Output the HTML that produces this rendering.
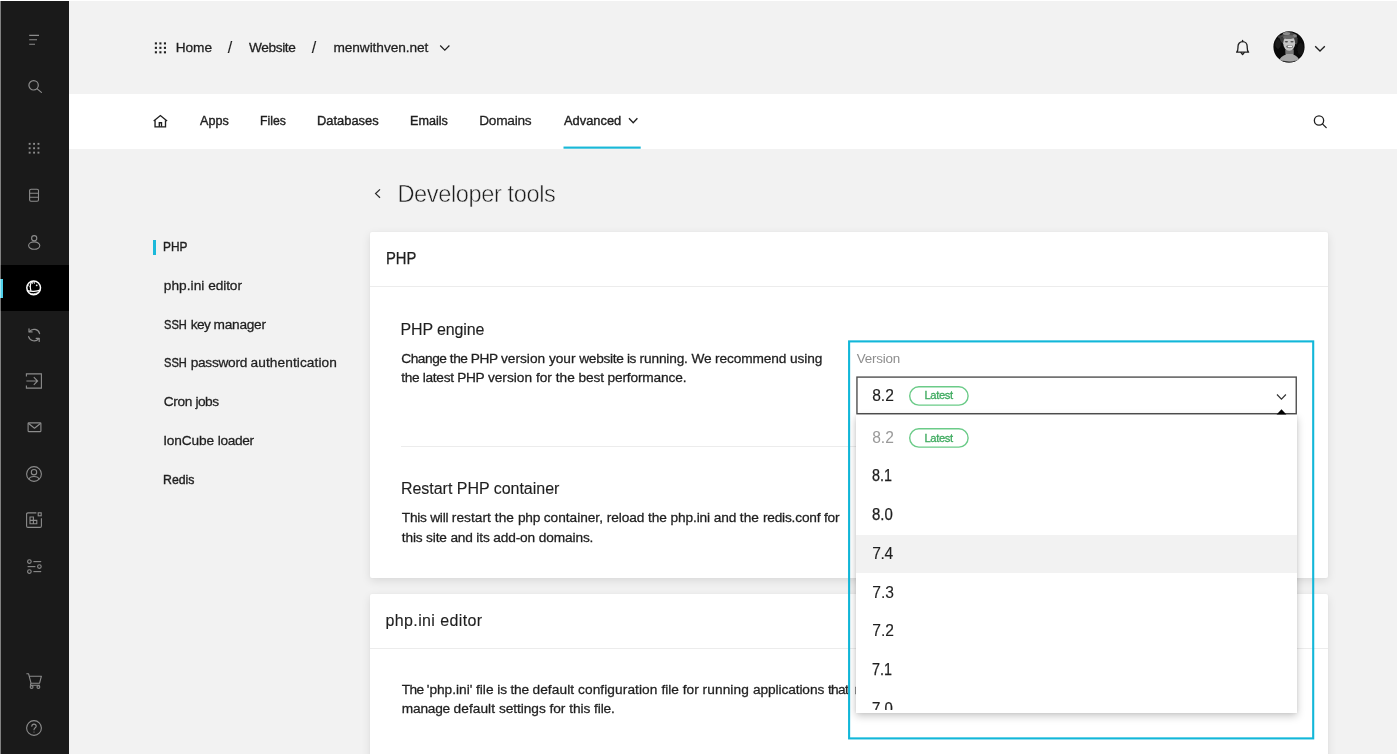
<!DOCTYPE html>
<html lang="en">
<head>
<meta charset="utf-8">
<title>Developer tools</title>
<style>
*{box-sizing:border-box;margin:0;padding:0}
html,body{width:1400px;height:754px;overflow:hidden;background:#fff}
body{position:relative;font-family:"Liberation Sans",sans-serif;color:#1f1f1f}
.abs{position:absolute}
.t{position:absolute;white-space:nowrap;line-height:1;font-family:"Liberation Sans",sans-serif}
#page{position:absolute;left:0;top:0;width:1400px;height:754px;background:#f2f2f2;overflow:hidden;filter:blur(0.4px)}
#wt{position:absolute;left:0;top:0;width:1400px;height:1.2px;background:#fff;z-index:50}
#wr{position:absolute;left:1397.4px;top:0;width:3px;height:754px;background:#fff;z-index:50}
#side{position:absolute;left:0;top:0;width:68.5px;height:754px;background:#1a1a1a}
#side .edge{position:absolute;left:0;top:0;width:1px;height:754px;background:rgba(255,255,255,.45)}
#side .act{position:absolute;left:0;top:265px;width:68.5px;height:46px;background:#000}
#side .bar{position:absolute;left:0;top:278.5px;width:3.2px;height:19.2px;background:#4fd0ea}
#side svg{position:absolute;overflow:visible}
#nav{position:absolute;left:68.5px;top:94.3px;width:1329px;height:54.3px;background:#fff}
.card{position:absolute;left:370px;width:958px;background:#fff;border-radius:2px;box-shadow:0 3px 10px rgba(0,0,0,.10),0 0 2px rgba(0,0,0,.04)}
.hr{position:absolute;height:1.2px;background:#ececec}
#hl{position:absolute;left:0;top:0}
#sel{position:absolute;left:856.2px;top:376.0px;width:441px;height:38.6px;border:1.2px solid #4a4a4a;background:#fff}
.pill{position:absolute;width:60px;height:20px;border:1.2px solid #63c982;border-radius:10px}
#panel{position:absolute;left:856px;top:415.0px;width:441px;height:297.6px;background:#fff;box-shadow:0 3px 8px rgba(0,0,0,.22),0 0 3px rgba(0,0,0,.08);overflow:hidden}
#panel .hi{position:absolute;left:0;top:120px;width:441px;height:38.4px;background:#f2f2f2}
#panel .clip{position:absolute;left:0;top:0;width:441px;height:295px;overflow:hidden}
</style>
</head>
<body>
<div id="wt"></div><div id="wr"></div>
<div id="page">
  <!-- top white nav bar -->
  <div id="nav"></div>
  <svg class="abs" style="left:563px;top:145px" width="79" height="5" viewBox="0 0 79 5"><rect x="0.5" y="1.55" width="77.2" height="2.15" fill="#19b8d7"/></svg>

  <!-- cards -->
  <div class="card" style="top:231.6px;height:346.8px"></div>
  <div class="card" style="top:593.8px;height:200px"></div>
  <div class="hr" style="left:370px;top:285.8px;width:958px"></div>
  <div class="hr" style="left:401px;top:445.8px;width:896px"></div>
  <div class="hr" style="left:370px;top:647.6px;width:958px"></div>

  <!-- left nav active bar -->
  <div class="abs" style="left:152.5px;top:239.7px;width:3px;height:15.6px;background:#1cb9da"></div>

  <div style="position:absolute;left:0;top:0">
<span class="t" style="left:175.70px;top:40px;font-size:13.7px;line-height:15px;color:#1f1f1f;letter-spacing:-0.066px;-webkit-text-stroke:0.28px #1f1f1f">Home</span>
<span class="t" style="left:227.80px;top:39px;font-size:16px;line-height:17px;color:#1f1f1f;letter-spacing:0.000px;-webkit-text-stroke:0.12px #1f1f1f">/</span>
<span class="t" style="left:248.95px;top:40px;font-size:13.7px;line-height:15px;color:#1f1f1f;letter-spacing:-0.372px;-webkit-text-stroke:0.28px #1f1f1f">Website</span>
<span class="t" style="left:311.80px;top:39px;font-size:16px;line-height:17px;color:#1f1f1f;letter-spacing:0.000px;-webkit-text-stroke:0.12px #1f1f1f">/</span>
<span class="t" style="left:333.45px;top:40px;font-size:13.7px;line-height:15px;color:#1f1f1f;letter-spacing:-0.074px;-webkit-text-stroke:0.28px #1f1f1f">menwithven.net</span>
<span class="t" style="left:199.70px;top:113px;font-size:13.7px;line-height:15px;color:#1f1f1f;letter-spacing:0.000px;-webkit-text-stroke:0.42px #1f1f1f;transform:scaleX(0.9201);transform-origin:0 0">Apps</span>
<span class="t" style="left:259.81px;top:113px;font-size:13.7px;line-height:15px;color:#1f1f1f;letter-spacing:0.000px;-webkit-text-stroke:0.42px #1f1f1f;transform:scaleX(0.8947);transform-origin:0 0">Files</span>
<span class="t" style="left:316.76px;top:113px;font-size:13.7px;line-height:15px;color:#1f1f1f;letter-spacing:0.000px;-webkit-text-stroke:0.42px #1f1f1f;transform:scaleX(0.9421);transform-origin:0 0">Databases</span>
<span class="t" style="left:409.88px;top:113px;font-size:13.7px;line-height:15px;color:#1f1f1f;letter-spacing:0.000px;-webkit-text-stroke:0.42px #1f1f1f;transform:scaleX(0.9198);transform-origin:0 0">Emails</span>
<span class="t" style="left:479.20px;top:113px;font-size:13.7px;line-height:15px;color:#1f1f1f;letter-spacing:-0.261px;-webkit-text-stroke:0.28px #1f1f1f">Domains</span>
<span class="t" style="left:563.95px;top:113px;font-size:13.7px;line-height:15px;color:#1f1f1f;letter-spacing:0.000px;-webkit-text-stroke:0.42px #1f1f1f;transform:scaleX(0.9392);transform-origin:0 0">Advanced</span>
<span class="t" style="left:397.45px;top:181px;font-size:23.6px;line-height:26px;color:#1c1c1c;letter-spacing:-0.399px;-webkit-text-stroke:0.5px #f2f2f2">Developer tools</span>
<span class="t" style="left:163.09px;top:239px;font-size:13.7px;line-height:15px;color:#1f1f1f;letter-spacing:0.000px;-webkit-text-stroke:0.42px #1f1f1f;transform:scaleX(0.8644);transform-origin:0 0">PHP</span>
<span class="t" style="left:163.75px;top:278px;font-size:13.7px;line-height:15px;color:#1f1f1f;letter-spacing:0.039px;-webkit-text-stroke:0.28px #1f1f1f">php.ini </span>
<span class="t" style="left:208.20px;top:278px;font-size:13.7px;line-height:15px;color:#1f1f1f;letter-spacing:-0.096px;-webkit-text-stroke:0.28px #1f1f1f">editor</span>
<span class="t" style="left:163.75px;top:317px;font-size:13.7px;line-height:15px;color:#1f1f1f;letter-spacing:0.000px;-webkit-text-stroke:0.42px #1f1f1f;transform:scaleX(0.8126);transform-origin:0 0">SSH </span>
<span class="t" style="left:190.70px;top:317px;font-size:13.7px;line-height:15px;color:#1f1f1f;letter-spacing:-0.551px;-webkit-text-stroke:0.28px #1f1f1f">key </span>
<span class="t" style="left:213.60px;top:317px;font-size:13.7px;line-height:15px;color:#1f1f1f;letter-spacing:-0.277px;-webkit-text-stroke:0.28px #1f1f1f">manager</span>
<span class="t" style="left:163.75px;top:355px;font-size:13.7px;line-height:15px;color:#1f1f1f;letter-spacing:0.000px;-webkit-text-stroke:0.42px #1f1f1f;transform:scaleX(0.8126);transform-origin:0 0">SSH </span>
<span class="t" style="left:190.70px;top:355px;font-size:13.7px;line-height:15px;color:#1f1f1f;letter-spacing:-0.281px;-webkit-text-stroke:0.28px #1f1f1f">password </span>
<span class="t" style="left:250.55px;top:355px;font-size:13.7px;line-height:15px;color:#1f1f1f;letter-spacing:0.079px;-webkit-text-stroke:0.28px #1f1f1f">authentication</span>
<span class="t" style="left:163.75px;top:394px;font-size:13.7px;line-height:15px;color:#1f1f1f;letter-spacing:-0.364px;-webkit-text-stroke:0.28px #1f1f1f">Cron </span>
<span class="t" style="left:195.40px;top:394px;font-size:13.7px;line-height:15px;color:#1f1f1f;letter-spacing:-0.489px;-webkit-text-stroke:0.28px #1f1f1f">jobs</span>
<span class="t" style="left:163.20px;top:433px;font-size:13.7px;line-height:15px;color:#1f1f1f;letter-spacing:-0.132px;-webkit-text-stroke:0.28px #1f1f1f">IonCube </span>
<span class="t" style="left:217.70px;top:433px;font-size:13.7px;line-height:15px;color:#1f1f1f;letter-spacing:-0.318px;-webkit-text-stroke:0.28px #1f1f1f">loader</span>
<span class="t" style="left:163.40px;top:472px;font-size:13.7px;line-height:15px;color:#1f1f1f;letter-spacing:0.000px;-webkit-text-stroke:0.42px #1f1f1f;transform:scaleX(0.8990);transform-origin:0 0">Redis</span>
<span class="t" style="left:385.53px;top:250px;font-size:16px;line-height:17px;color:#1f1f1f;letter-spacing:0.000px;-webkit-text-stroke:0.25px #1f1f1f;transform:scaleX(0.9239);transform-origin:0 0">PHP</span>
<span class="t" style="left:400.45px;top:321px;font-size:16px;line-height:17px;color:#1f1f1f;letter-spacing:-0.127px;-webkit-text-stroke:0.12px #1f1f1f">PHP engine</span>
<span class="t" style="left:401.25px;top:351px;font-size:13.7px;line-height:15px;color:#1f1f1f;letter-spacing:-0.452px;-webkit-text-stroke:0.28px #1f1f1f">Change the PHP </span>
<span class="t" style="left:501.00px;top:351px;font-size:13.7px;line-height:15px;color:#1f1f1f;letter-spacing:-0.004px;-webkit-text-stroke:0.28px #1f1f1f">version your </span>
<span class="t" style="left:579.30px;top:351px;font-size:13.7px;line-height:15px;color:#1f1f1f;letter-spacing:-0.327px;-webkit-text-stroke:0.28px #1f1f1f">website is </span>
<span class="t" style="left:639.60px;top:351px;font-size:13.7px;line-height:15px;color:#1f1f1f;letter-spacing:-0.163px;-webkit-text-stroke:0.28px #1f1f1f">running. We </span>
<span class="t" style="left:715.00px;top:351px;font-size:13.7px;line-height:15px;color:#1f1f1f;letter-spacing:-0.106px;-webkit-text-stroke:0.28px #1f1f1f">recommend using</span>
<span class="t" style="left:401.25px;top:370px;font-size:13.7px;line-height:15px;color:#1f1f1f;letter-spacing:-0.310px;-webkit-text-stroke:0.28px #1f1f1f">the latest PHP </span>
<span class="t" style="left:487.90px;top:370px;font-size:13.7px;line-height:15px;color:#1f1f1f;letter-spacing:0.010px;-webkit-text-stroke:0.28px #1f1f1f">version for the </span>
<span class="t" style="left:578.60px;top:370px;font-size:13.7px;line-height:15px;color:#1f1f1f;letter-spacing:-0.151px;-webkit-text-stroke:0.28px #1f1f1f">best performance.</span>
<span class="t" style="left:400.95px;top:480px;font-size:16px;line-height:17px;color:#1f1f1f;letter-spacing:-0.025px;-webkit-text-stroke:0.12px #1f1f1f">Restart PHP container</span>
<span class="t" style="left:401.80px;top:510px;font-size:13.7px;line-height:15px;color:#1f1f1f;letter-spacing:-0.247px;-webkit-text-stroke:0.28px #1f1f1f">This will </span>
<span class="t" style="left:451.80px;top:510px;font-size:13.7px;line-height:15px;color:#1f1f1f;letter-spacing:0.056px;-webkit-text-stroke:0.28px #1f1f1f">restart the </span>
<span class="t" style="left:517.90px;top:510px;font-size:13.7px;line-height:15px;color:#1f1f1f;letter-spacing:-0.197px;-webkit-text-stroke:0.28px #1f1f1f">php </span>
<span class="t" style="left:543.75px;top:510px;font-size:13.7px;line-height:15px;color:#1f1f1f;letter-spacing:-0.019px;-webkit-text-stroke:0.28px #1f1f1f">container, </span>
<span class="t" style="left:606.70px;top:510px;font-size:13.7px;line-height:15px;color:#1f1f1f;letter-spacing:-0.080px;-webkit-text-stroke:0.28px #1f1f1f">reload the </span>
<span class="t" style="left:670.50px;top:510px;font-size:13.7px;line-height:15px;color:#1f1f1f;letter-spacing:-0.123px;-webkit-text-stroke:0.28px #1f1f1f">php.ini and </span>
<span class="t" style="left:739.80px;top:510px;font-size:13.7px;line-height:15px;color:#1f1f1f;letter-spacing:0.067px;-webkit-text-stroke:0.28px #1f1f1f">the </span>
<span class="t" style="left:762.90px;top:510px;font-size:13.7px;line-height:15px;color:#1f1f1f;letter-spacing:-0.189px;-webkit-text-stroke:0.28px #1f1f1f">redis.conf for</span>
<span class="t" style="left:401.80px;top:530px;font-size:13.7px;line-height:15px;color:#1f1f1f;letter-spacing:-0.161px;-webkit-text-stroke:0.28px #1f1f1f">this site </span>
<span class="t" style="left:450.40px;top:530px;font-size:13.7px;line-height:15px;color:#1f1f1f;letter-spacing:-0.166px;-webkit-text-stroke:0.28px #1f1f1f">and its </span>
<span class="t" style="left:493.20px;top:530px;font-size:13.7px;line-height:15px;color:#1f1f1f;letter-spacing:-0.125px;-webkit-text-stroke:0.28px #1f1f1f">add-on </span>
<span class="t" style="left:538.75px;top:530px;font-size:13.7px;line-height:15px;color:#1f1f1f;letter-spacing:-0.127px;-webkit-text-stroke:0.28px #1f1f1f">domains.</span>
<span class="t" style="left:385.45px;top:612px;font-size:16px;line-height:17px;color:#1f1f1f;letter-spacing:0.389px;-webkit-text-stroke:0.12px #1f1f1f">php.ini editor</span>
<span class="t" style="left:401.80px;top:682px;font-size:13.7px;line-height:15px;color:#1f1f1f;letter-spacing:-0.597px;-webkit-text-stroke:0.28px #1f1f1f">The </span>
<span class="t" style="left:426.80px;top:682px;font-size:13.7px;line-height:15px;color:#1f1f1f;letter-spacing:-0.011px;-webkit-text-stroke:0.28px #1f1f1f">'php.ini' file </span>
<span class="t" style="left:497.30px;top:682px;font-size:13.7px;line-height:15px;color:#1f1f1f;letter-spacing:-0.188px;-webkit-text-stroke:0.28px #1f1f1f">is the </span>
<span class="t" style="left:532.50px;top:682px;font-size:13.7px;line-height:15px;color:#1f1f1f;letter-spacing:0.075px;-webkit-text-stroke:0.28px #1f1f1f">default </span>
<span class="t" style="left:578.00px;top:682px;font-size:13.7px;line-height:15px;color:#1f1f1f;letter-spacing:0.087px;-webkit-text-stroke:0.28px #1f1f1f">configuration </span>
<span class="t" style="left:661.40px;top:682px;font-size:13.7px;line-height:15px;color:#1f1f1f;letter-spacing:0.003px;-webkit-text-stroke:0.28px #1f1f1f">file for </span>
<span class="t" style="left:702.50px;top:682px;font-size:13.7px;line-height:15px;color:#1f1f1f;letter-spacing:0.117px;-webkit-text-stroke:0.28px #1f1f1f">running </span>
<span class="t" style="left:752.90px;top:682px;font-size:13.7px;line-height:15px;color:#1f1f1f;letter-spacing:-0.084px;-webkit-text-stroke:0.28px #1f1f1f">applications </span>
<span class="t" style="left:827.90px;top:682px;font-size:13.7px;line-height:15px;color:#1f1f1f;letter-spacing:-0.642px;-webkit-text-stroke:0.28px #1f1f1f">that</span>
<span class="t" style="left:854.70px;top:682px;font-size:13.7px;line-height:15px;color:#1f1f1f;letter-spacing:0.000px;-webkit-text-stroke:0.28px #1f1f1f">require special settings. You can</span>
<span class="t" style="left:401.80px;top:701px;font-size:13.7px;line-height:15px;color:#1f1f1f;letter-spacing:-0.209px;-webkit-text-stroke:0.28px #1f1f1f">manage </span>
<span class="t" style="left:453.60px;top:701px;font-size:13.7px;line-height:15px;color:#1f1f1f;letter-spacing:0.050px;-webkit-text-stroke:0.28px #1f1f1f">default </span>
<span class="t" style="left:498.90px;top:701px;font-size:13.7px;line-height:15px;color:#1f1f1f;letter-spacing:-0.042px;-webkit-text-stroke:0.28px #1f1f1f">settings </span>
<span class="t" style="left:549.50px;top:701px;font-size:13.7px;line-height:15px;color:#1f1f1f;letter-spacing:-0.031px;-webkit-text-stroke:0.28px #1f1f1f">for this </span>
<span class="t" style="left:594.10px;top:701px;font-size:13.7px;line-height:15px;color:#1f1f1f;letter-spacing:-0.124px;-webkit-text-stroke:0.28px #1f1f1f">file.</span>
  </div>

  <!-- breadcrumb icons -->
  <svg class="abs" style="left:154px;top:41.8px" width="13" height="12" viewBox="0 0 13 12" fill="#1f1f1f"><rect x="0.85" y="0.35" width="2.1" height="2.1"/><rect x="5.35" y="0.35" width="2.1" height="2.1"/><rect x="9.90" y="0.35" width="2.1" height="2.1"/><rect x="0.85" y="4.80" width="2.1" height="2.1"/><rect x="5.35" y="4.80" width="2.1" height="2.1"/><rect x="9.90" y="4.80" width="2.1" height="2.1"/><rect x="0.85" y="9.25" width="2.1" height="2.1"/><rect x="5.35" y="9.25" width="2.1" height="2.1"/><rect x="9.90" y="9.25" width="2.1" height="2.1"/></svg>
  <svg class="abs" style="left:439px;top:44.2px" width="12" height="8" viewBox="0 0 12 8" fill="none" stroke="#1f1f1f" stroke-width="1.2"><path d="M1.2 1.5 L5.8 6.2 L10.4 1.5"/></svg>

  <!-- home icon -->
  <svg class="abs" style="left:152px;top:114px" width="17" height="15" viewBox="0 0 17 15" fill="none" stroke="#1f1f1f" stroke-width="1.35" stroke-linejoin="miter" stroke-linecap="butt">
    <path d="M1.7 7 L8.4 1.5 L15.1 7"/><path d="M3.05 6.2 V12.85 H13.5 V6.2"/><path d="M7.3 12.85 V8.7 H9.5 V12.85"/>
  </svg>
  <!-- advanced chevron -->
  <svg class="abs" style="left:628px;top:116.6px" width="11" height="8" viewBox="0 0 11 8" fill="none" stroke="#1f1f1f" stroke-width="1.3"><path d="M1 1.2 L5.2 5.8 L9.4 1.2"/></svg>
  <!-- back chevron -->
  <svg class="abs" style="left:374px;top:188.4px" width="8" height="12" viewBox="0 0 8 12" fill="none" stroke="#2a2a2a" stroke-width="1.25"><path d="M6 1.4 L1.6 5.6 L6 9.8"/></svg>

  <!-- bell -->
  <svg class="abs" style="left:1234px;top:39.0px" width="18" height="18" viewBox="0 0 18 18" fill="none" stroke="#1f1f1f" stroke-width="1.3" stroke-linejoin="round" stroke-linecap="round">
    <path d="M2.6 13.2 C4.2 11.8 4 9.6 4 7.6 C4 4.6 6 2.6 8.6 2.6 C11.2 2.6 13.2 4.6 13.2 7.6 C13.2 9.6 13 11.8 14.6 13.2 Z"/><path d="M7 13.6 L8.6 15.6 L10.2 13.6"/><path d="M8.6 1.4 V2.6"/>
  </svg>
  <!-- avatar -->
  <svg class="abs" style="left:1272px;top:29.3px" width="34" height="34" viewBox="-1 -1 34 34">
    <defs><clipPath id="av"><circle cx="16" cy="16.9" r="15.6"/></clipPath>
    <filter id="bl" x="-20%" y="-20%" width="140%" height="140%"><feGaussianBlur stdDeviation="0.75"/></filter></defs>
    <circle cx="16" cy="16.9" r="16.3" fill="#fafafa"/>
    <g clip-path="url(#av)">
      <rect x="-1" y="-1" width="34" height="34" fill="#0a0a0a"/>
      <g filter="url(#bl)">
        <ellipse cx="5" cy="14" rx="3" ry="5" fill="#1a1a1a"/>
        <ellipse cx="27.5" cy="19" rx="3" ry="6" fill="#181818"/>
        <ellipse cx="7.5" cy="7" rx="2.6" ry="1.8" fill="#3c3c3c"/>
        <ellipse cx="15.8" cy="8.6" rx="8.6" ry="6.6" fill="#4e4e4e"/>
        <ellipse cx="13.5" cy="3.6" rx="3.6" ry="1.5" fill="#8c8c8c"/>
        <ellipse cx="21.8" cy="5.8" rx="2.2" ry="1.6" fill="#808080"/>
        <ellipse cx="9" cy="9.5" rx="1.5" ry="3" fill="#3a3a3a"/>
        <ellipse cx="23" cy="11" rx="1.6" ry="3.4" fill="#3a3a3a"/>
        <path d="M5.5 33 C6 27.5 10.5 25.8 12.8 24.6 L12.6 19.5 H20.4 L20.4 24.6 C22.6 25.8 26.5 27.5 27 33Z" fill="#a6a6a6"/>
        <rect x="12.6" y="19.4" width="7.8" height="4.6" fill="#787878"/>
        <ellipse cx="16.2" cy="13.3" rx="6" ry="7.4" fill="#c6c6c6"/>
        <ellipse cx="15.6" cy="6.9" rx="5.4" ry="2" fill="#6a6a6a"/>
        <ellipse cx="13.4" cy="11.7" rx="1.7" ry="0.8" fill="#4c4c4c"/>
        <ellipse cx="19" cy="11.7" rx="1.7" ry="0.8" fill="#4c4c4c"/>
        <ellipse cx="16.6" cy="16.6" rx="3.4" ry="1.7" fill="#6e6e6e"/>
        <ellipse cx="17" cy="16.4" rx="2.4" ry="0.9" fill="#f4f4f4"/>
        <path d="M4 33 C6.5 29.5 11 31.2 16 31.6 C21 31.2 25.5 29 28.5 33Z" fill="#2e2e2e"/>
      </g>
    </g>
  </svg>
  <svg class="abs" style="left:1314px;top:44.6px" width="12" height="8" viewBox="0 0 12 8" fill="none" stroke="#1f1f1f" stroke-width="1.3"><path d="M1.2 1.3 L6 6 L10.8 1.3"/></svg>
  <!-- search right -->
  <svg class="abs" style="left:1312px;top:114.0px" width="16" height="16" viewBox="0 0 16 16" fill="none" stroke="#1f1f1f" stroke-width="1.3" stroke-linecap="round"><circle cx="7" cy="6.5" r="4.65"/><path d="M10.4 9.9 L14.2 13.6"/></svg>

  <!-- highlight frame -->
  <svg class="abs" style="left:846px;top:338px" width="470" height="404" viewBox="0 0 470 404"><rect x="3.1" y="3.4" width="464.1" height="397" fill="none" stroke="#12b7d9" stroke-width="2.1"/></svg>

  <!-- select -->
  <svg class="abs" style="left:855px;top:375px" width="444" height="42" viewBox="0 0 444 42"><rect x="1.95" y="2.1" width="439.3" height="36.6" fill="#fff" stroke="#505050" stroke-width="1.4"/></svg>
  <svg class="abs" style="left:908px;top:384.5px" width="62" height="22" viewBox="0 0 62 22" fill="none" stroke="#6bcb88" stroke-width="1.4"><rect x="1.7" y="1.7" width="58.4" height="18.4" rx="9.2"/></svg>
  <svg class="abs" style="left:1275px;top:392.8px" width="13" height="8" viewBox="0 0 13 8" fill="none" stroke="#333" stroke-width="1.2"><path d="M2 1.5 L6.45 6.1 L10.9 1.5"/></svg>
  <div style="position:absolute;left:0;top:0">
<span class="t" style="left:856.70px;top:351px;font-size:13.4px;line-height:15px;color:#8e8e8e;letter-spacing:-0.186px">Version</span>
<span class="t" style="left:872.20px;top:387px;font-size:15.6px;line-height:17px;color:#1f1f1f;letter-spacing:-0.002px;-webkit-text-stroke:0.12px #1f1f1f">8.2</span>
<span class="t" style="left:924.45px;top:389px;font-size:11.2px;line-height:12px;color:#3daa5e;letter-spacing:-0.354px;-webkit-text-stroke:0.3px #3daa5e">Latest</span>
  </div>

  <!-- dropdown -->
  <div id="panel">
    <div class="hi"></div>
    <svg class="abs" style="left:52px;top:12.3px" width="62" height="22" viewBox="0 0 62 22" fill="none" stroke="#6bcb88" stroke-width="1.4"><rect x="1.7" y="1.7" width="58.4" height="18.4" rx="9.2"/></svg>
    <div class="clip">
<span class="t" style="left:16.20px;top:14px;font-size:15.6px;line-height:17px;color:#9a9a9a;letter-spacing:-0.002px">8.2</span>
<span class="t" style="left:68.45px;top:17px;font-size:11.2px;line-height:12px;color:#3daa5e;letter-spacing:-0.354px;-webkit-text-stroke:0.3px #3daa5e">Latest</span>
<span class="t" style="left:16.20px;top:52px;font-size:15.6px;line-height:17px;color:#1f1f1f;letter-spacing:0.000px;-webkit-text-stroke:0.25px #1f1f1f;transform:scaleX(0.9212);transform-origin:0 0">8.1</span>
<span class="t" style="left:16.20px;top:91px;font-size:15.6px;line-height:17px;color:#1f1f1f;letter-spacing:0.000px;-webkit-text-stroke:0.25px #1f1f1f;transform:scaleX(0.9589);transform-origin:0 0">8.0</span>
<span class="t" style="left:16.20px;top:130px;font-size:15.6px;line-height:17px;color:#1f1f1f;letter-spacing:-0.402px;-webkit-text-stroke:0.12px #1f1f1f">7.4</span>
<span class="t" style="left:16.20px;top:169px;font-size:15.6px;line-height:17px;color:#1f1f1f;letter-spacing:0.048px;-webkit-text-stroke:0.12px #1f1f1f">7.3</span>
<span class="t" style="left:16.20px;top:207px;font-size:15.6px;line-height:17px;color:#1f1f1f;letter-spacing:0.048px;-webkit-text-stroke:0.12px #1f1f1f">7.2</span>
<span class="t" style="left:16.20px;top:246px;font-size:15.6px;line-height:17px;color:#1f1f1f;letter-spacing:0.000px;-webkit-text-stroke:0.25px #1f1f1f;transform:scaleX(0.9212);transform-origin:0 0">7.1</span>
<span class="t" style="left:16.20px;top:285px;font-size:15.6px;line-height:17px;color:#1f1f1f;letter-spacing:0.000px;-webkit-text-stroke:0.25px #1f1f1f;transform:scaleX(0.9589);transform-origin:0 0">7.0</span>
    </div>
  </div>
  <svg class="abs" style="left:1276px;top:408.6px" width="11" height="6" viewBox="0 0 11 6"><path d="M0.6 5.6 L5.5 0.3 L10.4 5.6Z" fill="#000"/></svg>

  <!-- sidebar -->
  <div id="side">
    <div class="act"></div><div class="bar"></div><div class="edge"></div>
    
    <!-- menu -->
    <svg style="left:26.2px;top:32px" width="16" height="16" viewBox="0 0 16 16" fill="none" stroke="#8c8c8c" stroke-width="1.1"><path d="M3.2 3.4 H13 M3.2 7.8 H11 M3.2 12.3 H9"/></svg>
    <!-- search -->
    <svg style="left:26.7px;top:77.5px" width="16" height="16" viewBox="0 0 16 16" fill="none" stroke="#8c8c8c" stroke-width="1.2" stroke-linecap="round"><circle cx="6.6" cy="7.3" r="4.7"/><path d="M10.2 10.9 L14.4 14.4"/></svg>
    <!-- grid -->
    <svg style="left:26.4px;top:139.6px" width="16" height="16" viewBox="0 0 16 16" fill="#8c8c8c">
      <rect x="2.7" y="2.9" width="1.9" height="1.9"/><rect x="7.1" y="2.9" width="1.9" height="1.9"/><rect x="11.5" y="2.9" width="1.9" height="1.9"/>
      <rect x="2.7" y="7.3" width="1.9" height="1.9"/><rect x="7.1" y="7.3" width="1.9" height="1.9"/><rect x="11.5" y="7.3" width="1.9" height="1.9"/>
      <rect x="2.7" y="11.7" width="1.9" height="1.9"/><rect x="7.1" y="11.7" width="1.9" height="1.9"/><rect x="11.5" y="11.7" width="1.9" height="1.9"/>
    </svg>
    <!-- server -->
    <svg style="left:26.2px;top:187px" width="16" height="16" viewBox="0 0 16 16" fill="none" stroke="#8c8c8c" stroke-width="1.1"><rect x="3.6" y="2.2" width="8.9" height="12" rx="1.4"/><path d="M3.6 6.2 H12.5 M3.6 10.2 H12.5"/></svg>
    <!-- user -->
    <svg style="left:26.2px;top:233.5px" width="16" height="16" viewBox="0 0 16 16" fill="none" stroke="#8c8c8c" stroke-width="1.1"><circle cx="8.2" cy="4.2" r="2.6"/><ellipse cx="8.2" cy="11.6" rx="5.6" ry="3.7"/></svg>
    <!-- globe (active) -->
    <svg style="left:26.2px;top:280.3px" width="16" height="16" viewBox="0 0 16 16" fill="none" stroke="#ffffff" stroke-width="1.1"><circle cx="7.65" cy="7.85" r="6.85" stroke-width="1.5"/><path d="M5.6 1.6 C4.2 4.4 4.2 8.6 4.9 11" stroke-width="1.2"/><path d="M1.3 10.6 C5 11.8 11 11.6 14.1 10.2" stroke-width="1.3"/><path d="M3.6 13.2 C6 14 9.6 13.8 11.8 12.6" stroke-width="0.9" opacity=".8"/><path d="M6.4 4 V2 H8.4 V4" stroke-width="0.9" opacity=".8"/><circle cx="10.7" cy="5.3" r="0.9" fill="#fff" stroke="none" opacity=".9"/><path d="M2.2 5.2 L3.6 6.8" stroke-width="1" opacity=".7"/></svg>
    <!-- refresh -->
    <svg style="left:26.2px;top:326.5px" width="16" height="16" viewBox="0 0 16 16" fill="none" stroke="#8c8c8c" stroke-width="1.2" stroke-linecap="round" stroke-linejoin="round"><path d="M13.6 6.6 A5.8 5.8 0 0 0 3.4 4.6 M2.6 9.6 A5.8 5.8 0 0 0 12.8 11.6"/><path d="M3 1.8 V4.9 H6.1 M13.2 14.4 V11.3 H10.1"/></svg>
    <!-- login -->
    <svg style="left:26.2px;top:373px" width="16" height="16" viewBox="0 0 16 16" fill="none" stroke="#8c8c8c" stroke-width="1.1"><path d="M0.4 3.6 V0.9 H15.4 V15.1 H0.4 V12.4"/><path d="M0.4 8 H11.6 M7.8 4.2 L11.6 8 L7.8 11.8"/></svg>
    <!-- mail -->
    <svg style="left:26.2px;top:419.2px" width="16" height="16" viewBox="0 0 16 16" fill="none" stroke="#8c8c8c" stroke-width="1.1" stroke-linejoin="round"><rect x="2.1" y="3.9" width="12.8" height="8.7" rx="0.6"/><path d="M2.3 4.2 L8.5 9.2 L14.7 4.2"/></svg>
    <!-- user circle -->
    <svg style="left:26.2px;top:465.7px" width="16" height="16" viewBox="0 0 16 16" fill="none" stroke="#8c8c8c" stroke-width="1.1"><circle cx="8" cy="8" r="7.4"/><circle cx="8" cy="6.2" r="2.7"/><path d="M2.9 13.2 C4.2 9.6 11.8 9.6 13.1 13.2"/></svg>
    <!-- apps box -->
    <svg style="left:26.2px;top:512px" width="16" height="16" viewBox="0 0 16 16" fill="none" stroke="#8c8c8c" stroke-width="1.1"><path d="M10.4 0.9 H2 Q0.6 0.9 0.6 2.3 V14 Q0.6 15.4 2 15.4 H14 Q15.4 15.4 15.4 14 V6.2"/><rect x="12.2" y="0.8" width="3" height="3"/><path d="M4 5 H7.4 V11.8 H4 Z M7.4 8.4 H10.8 V11.8 H7.4 M4 8.4 H7.4"/></svg>
    <!-- sliders -->
    <svg style="left:26.2px;top:559px" width="16" height="16" viewBox="0 0 16 16" fill="none" stroke="#8c8c8c" stroke-width="1.1"><circle cx="3.4" cy="2.6" r="1.8"/><path d="M7.4 2.6 H15.2"/><circle cx="13.4" cy="7.6" r="1.8"/><path d="M1.6 7.6 H9.4"/><circle cx="3.4" cy="12.6" r="1.8"/><path d="M7.4 12.6 H15.2"/></svg>
    <!-- cart -->
    <svg style="left:26.2px;top:673px" width="16" height="16" viewBox="0 0 16 16" fill="none" stroke="#8c8c8c" stroke-width="1.1" stroke-linejoin="round"><path d="M0.4 0.8 H2.6 L5 10.2 H13.6 L15.4 3.2 H3.2"/><path d="M5 10.2 L4.4 12.2 H13.8"/><circle cx="5.6" cy="14" r="1.4"/><circle cx="12.4" cy="14" r="1.4"/></svg>
    <!-- help -->
    <svg style="left:26.2px;top:719.8px" width="16" height="16" viewBox="0 0 16 16" fill="none" stroke="#8c8c8c" stroke-width="1.1"><circle cx="8" cy="8" r="7.4"/><path d="M5.8 6.2 C5.8 3.4 10.2 3.4 10.2 6.2 C10.2 7.8 8 7.8 8 9.8" stroke-linecap="round"/><circle cx="8" cy="12" r="0.6" fill="#8c8c8c" stroke="none"/></svg>

  </div>
</div>
</body>
</html>
